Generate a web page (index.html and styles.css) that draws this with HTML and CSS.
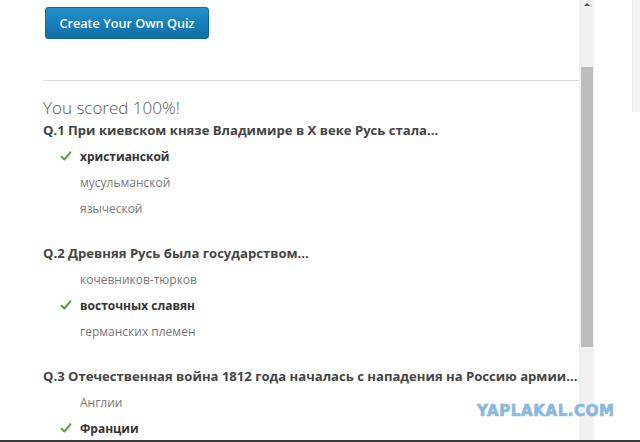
FILE: index.html
```html
<!DOCTYPE html>
<html lang="ru">
<head>
  <meta charset="UTF-8" />
  <meta name="viewport" content="width=device-width, initial-scale=1.0"/>
  <title>Quiz results</title>
  <link rel="stylesheet" href="styles.css">
</head>
<body>
  <div class="page">
    <div class="main">
      <div class="content">
        <div class="actions">
          <a class="btn" href="#">Create Your Own Quiz</a>
        </div>
        <hr class="divider">

        <div class="score">You scored 100%!</div>

        <div class="question">
          <div class="q-title">Q.1 При киевском князе Владимире в X веке Русь стала...</div>
          <div class="answer correct"><span class="check"><svg viewBox="0 0 12 12"><path d="M1.5 6.8 L4.4 9.6 L10.5 2.2"/></svg></span>христианской</div>
          <div class="answer"><span class="check"></span>мусульманской</div>
          <div class="answer"><span class="check"></span>языческой</div>
        </div>

        <div class="question">
          <div class="q-title">Q.2 Древняя Русь была государством...</div>
          <div class="answer"><span class="check"></span>кочевников-тюрков</div>
          <div class="answer correct"><span class="check"><svg viewBox="0 0 12 12"><path d="M1.5 6.8 L4.4 9.6 L10.5 2.2"/></svg></span>восточных славян</div>
          <div class="answer"><span class="check"></span>германских племен</div>
        </div>

        <div class="question">
          <div class="q-title">Q.3 Отечественная война 1812 года началась с нападения на Россию армии...</div>
          <div class="answer"><span class="check"></span>Англии</div>
          <div class="answer correct"><span class="check"><svg viewBox="0 0 12 12"><path d="M1.5 6.8 L4.4 9.6 L10.5 2.2"/></svg></span>Франции</div>
        </div>
      </div>

      <div class="scrollbar">
        <div class="arrow"></div>
        <div class="thumb"></div>
      </div>

      <div class="side">
        <div class="side-panel"></div>
      </div>

      <div class="watermark">YAPLAKAL.COM</div>
    </div>
    <div class="bottom-line"></div>
  </div>
</body>
</html>
```

FILE: styles.css
```css
* {
  box-sizing: border-box;
  margin: 0;
  padding: 0;
}

html, body {
  height: 100%;
}

body {
  font-family: 'Open Sans', 'Noto Sans', sans-serif;
  background: #fff;
  color: #444;
  overflow: hidden;
}

.page {
  height: 442px;
  display: flex;
  flex-direction: column;
}

.main {
  flex: 1;
  display: flex;
  position: relative;
  overflow: hidden;
}

.content {
  width: 579px;
  padding: 7px 0 0 43px;
  overflow: hidden;
}

.actions {
  padding-left: 2px;
}

.btn {
  display: inline-flex;
  align-items: center;
  justify-content: center;
  width: 164px;
  height: 32px;
  font-size: 12.7px;
  font-weight: 600;
  color: #fff;
  text-decoration: none;
  background: linear-gradient(#2390cb, #0f6ea5);
  border: 1px solid #0d679b;
  border-radius: 3px;
}

.divider {
  border: none;
  border-top: 1px solid #dcdcdc;
  margin-top: 41px;
}

.score {
  margin-top: 17px;
  font-size: 17px;
  font-weight: 300;
  line-height: 20px;
  color: #555;
}

.question {
  margin-bottom: 20px;
}

.q-title {
  font-size: 13.1px;
  font-weight: 700;
  line-height: 24px;
  margin-bottom: 1px;
  color: #444;
  white-space: nowrap;
}

.answer {
  display: flex;
  align-items: center;
  height: 26px;
  padding-left: 17px;
  font-size: 12px;
  color: #777;
}

.answer.correct {
  font-weight: 700;
  color: #333;
}

.check {
  width: 12px;
  height: 12px;
  margin-right: 8px;
  display: inline-flex;
}

.check svg {
  width: 12px;
  height: 12px;
}

.check path {
  fill: none;
  stroke: #4f9a35;
  stroke-width: 1.9;
  stroke-linecap: round;
  stroke-linejoin: round;
}

.scrollbar {
  width: 15px;
  background: #f0f0f0;
  display: flex;
  flex-direction: column;
  align-items: center;
}

.arrow {
  margin-top: 3px;
  width: 0;
  height: 0;
  border-left: 3px solid transparent;
  border-right: 3px solid transparent;
  border-bottom: 3px solid #555;
}

.thumb {
  margin-top: 61px;
  width: 12px;
  height: 280px;
  background: #bdbdbd;
}

.side {
  flex: 1;
  display: flex;
  justify-content: flex-end;
}

.side-panel {
  width: 8px;
  height: 112px;
  background: #f3f3f3;
  border-left: 1px solid #ececec;
}

/* site stamp over the lower right corner */
.watermark {
  position: absolute;
  left: 477px;
  top: 402px;
  font-family: 'DejaVu Sans', 'Liberation Sans', sans-serif;
  font-weight: 700;
  font-size: 15px;
  line-height: 18px;
  letter-spacing: 0.6px;
  color: #8bb9da;
  -webkit-text-stroke: 0.7px #8bb9da;
}

.bottom-line {
  height: 2px;
  background: #3a3a3a;
}
```
